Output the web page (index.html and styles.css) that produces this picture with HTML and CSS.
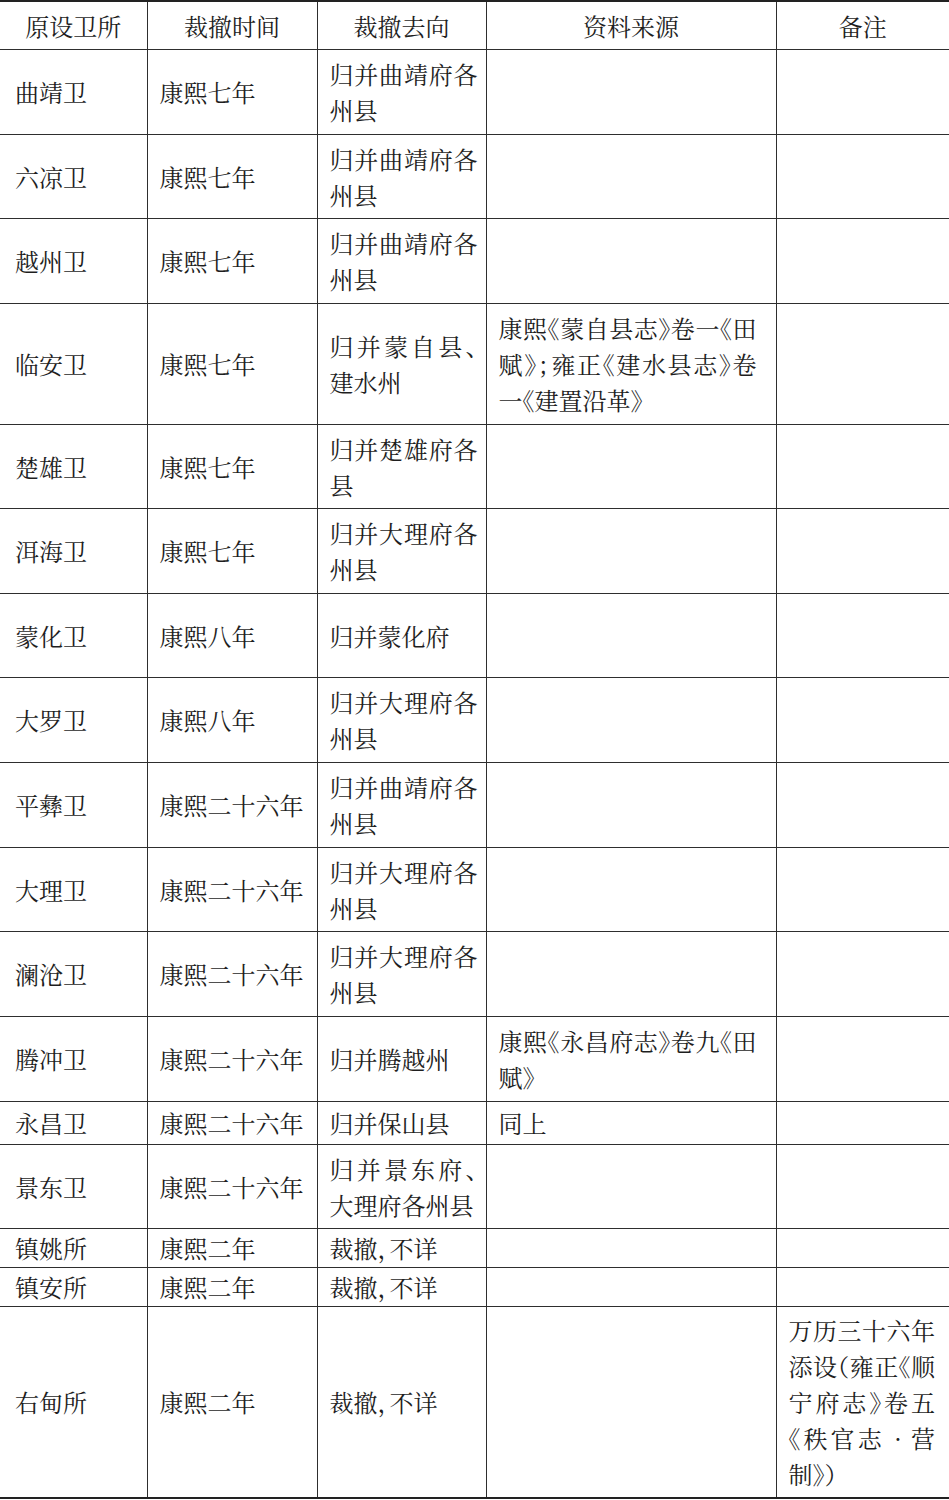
FILE: index.html
```html
<!DOCTYPE html>
<html lang="zh-CN">
<head>
<meta charset="utf-8">
<title>云南卫所裁撤表</title>
<link rel="stylesheet" href="styles.css">
</head>
<body>
<table class="grid">
  <colgroup>
    <col class="c1">
    <col class="c2">
    <col class="c3">
    <col class="c4">
    <col class="c5">
  </colgroup>
  <thead>
    <tr><th>原设卫所</th><th>裁撤时间</th><th>裁撤去向</th><th>资料来源</th><th>备注</th></tr>
  </thead>
  <tbody>
    <tr><td>曲靖卫</td><td>康熙七年</td><td class="dest">归并曲靖府各州县</td><td class="src"></td><td class="note"></td></tr>
    <tr><td>六凉卫</td><td>康熙七年</td><td class="dest">归并曲靖府各州县</td><td class="src"></td><td class="note"></td></tr>
    <tr><td>越州卫</td><td>康熙七年</td><td class="dest">归并曲靖府各州县</td><td class="src"></td><td class="note"></td></tr>
    <tr><td>临安卫</td><td>康熙七年</td><td class="dest">归并蒙自县、建水州</td><td class="src">康熙《蒙自县志》卷一《田赋》；雍正《建水县志》卷一《建置沿革》</td><td class="note"></td></tr>
    <tr><td>楚雄卫</td><td>康熙七年</td><td class="dest">归并楚雄府各县</td><td class="src"></td><td class="note"></td></tr>
    <tr><td>洱海卫</td><td>康熙七年</td><td class="dest">归并大理府各州县</td><td class="src"></td><td class="note"></td></tr>
    <tr class="two"><td>蒙化卫</td><td>康熙八年</td><td class="dest">归并蒙化府</td><td class="src"></td><td class="note"></td></tr>
    <tr><td>大罗卫</td><td>康熙八年</td><td class="dest">归并大理府各州县</td><td class="src"></td><td class="note"></td></tr>
    <tr><td>平彝卫</td><td>康熙二十六年</td><td class="dest">归并曲靖府各州县</td><td class="src"></td><td class="note"></td></tr>
    <tr><td>大理卫</td><td>康熙二十六年</td><td class="dest">归并大理府各州县</td><td class="src"></td><td class="note"></td></tr>
    <tr><td>澜沧卫</td><td>康熙二十六年</td><td class="dest">归并大理府各州县</td><td class="src"></td><td class="note"></td></tr>
    <tr><td>腾冲卫</td><td>康熙二十六年</td><td class="dest">归并腾越州</td><td class="src">康熙《永昌府志》卷九《田赋》</td><td class="note"></td></tr>
    <tr class="compact"><td>永昌卫</td><td>康熙二十六年</td><td class="dest">归并保山县</td><td class="src">同上</td><td class="note"></td></tr>
    <tr><td>景东卫</td><td>康熙二十六年</td><td class="dest">归并景东府、大理府各州县</td><td class="src"></td><td class="note"></td></tr>
    <tr class="tight"><td>镇姚所</td><td>康熙二年</td><td class="dest">裁撤，不详</td><td class="src"></td><td class="note"></td></tr>
    <tr class="tight"><td>镇安所</td><td>康熙二年</td><td class="dest">裁撤，不详</td><td class="src"></td><td class="note"></td></tr>
    <tr class="last"><td>右甸所</td><td>康熙二年</td><td class="dest">裁撤，不详</td><td class="src"></td><td class="note">万历三十六年添设（雍正《顺宁府志》卷五《秩官志 · 营制》）</td></tr>
  </tbody>
</table>
</body>
</html>
```

FILE: styles.css
```css
html, body {
  margin: 0;
  padding: 0;
  background: #ffffff;
}

.grid {
  width: 949px;
  border-collapse: collapse;
  table-layout: fixed;
  font-family: "Noto Serif CJK SC", "Noto Sans CJK SC", "Liberation Serif", serif;
  font-size: 24px;
  line-height: 36px;
  color: #1e1e1e;
  font-feature-settings: "halt";
}

.c1 { width: 147px; }
.c2 { width: 170px; }
.c3 { width: 169px; }
.c4 { width: 290px; }
.c5 { width: 173px; }

.grid th,
.grid td {
  border: 1px solid #2e2e2e;
  padding: 6px 10px 5.65px 12px;
  vertical-align: middle;
  text-align: justify;
  font-weight: 400;
}

.grid th {
  text-align: center;
  padding: 6px 4px 5px 4px;
  border-top: 2px solid #222222;
}

.grid tr > td:first-child {
  border-left: none;
  padding-left: 15px;
}

.grid tr > th:first-child {
  border-left: none;
}

.grid tr > :last-child {
  border-right: none;
}

.grid td.dest { padding-right: 8px; }
.grid td.src { padding-right: 19px; }
.grid td.note { padding-right: 14px; }

.grid tr.two td {
  height: 72px;
}

.grid tr.compact td {
  padding-top: 3px;
  padding-bottom: 3px;
}

.grid tr.tight td {
  padding-top: 1px;
  padding-bottom: 1px;
}

.grid tr.last td {
  padding-top: 5px;
  padding-bottom: 5px;
  border-bottom: 2px solid #222222;
}
```
